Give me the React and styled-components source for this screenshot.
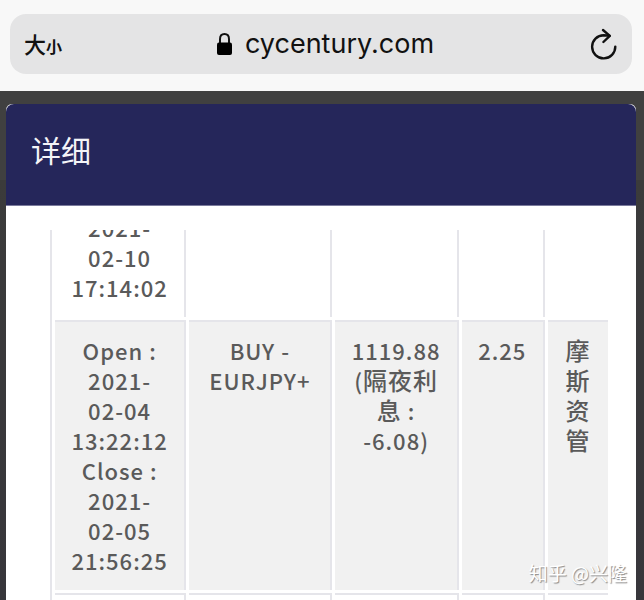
import React, { useLayoutEffect, useRef } from "react";
import styled, { createGlobalStyle } from "styled-components";

const GlobalStyle = createGlobalStyle`
  * {
    box-sizing: border-box;
  }

  body {
    margin: 0;
    font-family: "Noto Sans CJK SC", sans-serif;
  }

  button {
    border: none;
    background: none;
    padding: 0;
    color: inherit;
    font-family: inherit;
    cursor: pointer;
  }
`;

const Screen = styled.div`
  position: relative;
  display: flex;
  flex-direction: column;
  height: 100vh;
  overflow: hidden;
  background: linear-gradient(#404040, #404040 180px, #3b3b3b 180px, #37363b);
`;

const BrowserBar = styled.header`
  flex: none;
  padding: 14px 12px 17px 10px;
  background-color: #f8f8f8;
`;

const AddressField = styled.div`
  display: grid;
  grid-template-columns: 44px 1fr 44px;
  align-items: center;
  height: 60px;
  padding: 0 6px 0 14px;
  border-radius: 16px;
  background-color: #e4e4e5;
  color: #111;
`;

const TextSizeButton = styled.button`
  display: flex;
  align-items: baseline;
  font-size: 22px;
  font-weight: 500;
  line-height: 30px;

  small {
    font-size: 16px;
    font-weight: 700;
  }
`;

const Address = styled.a`
  display: flex;
  align-items: center;
  justify-content: center;
  gap: 12px;
  color: inherit;
  font-family: Inter, sans-serif;
  font-size: 27px;
  line-height: 32px;
  text-decoration: none;
`;

const ReloadButton = styled.button`
  display: flex;
  justify-content: center;
`;

const Modal = styled.section`
  flex: 1;
  min-height: 0;
  display: flex;
  flex-direction: column;
  margin: 13px 8px 0 6px;
  border-radius: 6px 6px 0 0;
  background-color: #fff;
`;

const ModalHeader = styled.div`
  flex: none;
  padding: 25px 25px 36px;
  border-bottom: 1px solid #7a7a9c;
  border-radius: 8px 8px 0 0;
  background-color: #25265a;
`;

const ModalTitle = styled.h1`
  margin: 0;
  color: #f4f4f8;
  font-size: 30px;
  font-weight: 400;
  line-height: 40px;
`;

const ModalBody = styled.div`
  flex: 1;
  min-height: 0;
  margin: 24px 28px 0 44px;
  overflow: auto;
  scrollbar-width: none;
`;

const Table = styled.table`
  table-layout: fixed;
  width: 563px;
  border-left: 2px solid #e5e5ea;
  border-collapse: separate;
  border-spacing: 3px;
`;

const Column = styled.col`
  width: ${({ $width }) => $width}px;
`;

const Row = styled.tr`
  background-color: ${({ $shaded }) => ($shaded ? "#f1f1f1" : "#fff")};
`;

const Cell = styled.td`
  padding: 13px 0 15px;
  border-top: 2px solid #e5e5ea;
  border-right: 2px solid #e5e5ea;
  color: #5a5a5a;
  font-size: 22px;
  font-weight: 500;
  letter-spacing: 1px;
  line-height: 30px;
  text-align: center;
  vertical-align: top;
  white-space: pre-line;
`;

const Han = styled.span`
  font-size: 24px;
  line-height: 1;
`;

const Watermark = styled.div`
  position: absolute;
  right: 17px;
  bottom: 13px;
  color: #fff;
  font-size: 19px;
  line-height: 28px;
  text-shadow: 1px 1px 1px #888;
`;

const LockIcon = () => (
  <svg width="17" height="24" viewBox="0 0 17 24" aria-hidden="true">
    <path
      d="M4 12V7.2C4 4 5.8 2 8.5 2S13 4 13 7.2V12"
      fill="none"
      stroke="#111"
      strokeWidth="2"
    />
    <rect x="1" y="10.5" width="15" height="12.5" rx="2" fill="#000" />
  </svg>
);

const ReloadIcon = () => (
  <svg
    width="28"
    height="32"
    viewBox="0 0 28 32"
    fill="none"
    stroke="#111"
    strokeWidth="2.4"
    strokeLinecap="round"
    strokeLinejoin="round"
    aria-hidden="true"
  >
    <path d="M25.3 18.6A11.6 11.6 0 1 1 13.7 7.2L19.6 7.8" />
    <path d="M13 2L19.8 7.9L13.4 14" />
  </svg>
);

const columns = [131, 143, 123, 83, 62];

const trades = [
  { id: 1, cells: ["2021-\n02-10\n17:14:02", "", "", "", ""] },
  {
    id: 2,
    shaded: true,
    cells: [
      "Open :\n2021-\n02-04\n13:22:12\nClose :\n2021-\n02-05\n21:56:25",
      "BUY -\nEURJPY+",
      "1119.88\n(隔夜利\n息 :\n-6.08)",
      "2.25",
      "摩\n斯\n资\n管",
    ],
  },
  { id: 3, cells: ["", "", "", "", ""] },
];

// Chinese runs are set a little larger than the Latin text beside them
const renderText = (text) =>
  text
    .split(/([\u4e00-\u9fff]+)/)
    .map((part, i) => (i % 2 ? <Han key={i}>{part}</Han> : part));

const App = () => {
  const body = useRef(null);

  useLayoutEffect(() => {
    body.current.scrollTop = 36;
  }, []);

  return (
    <>
      <GlobalStyle />
      <Screen>
        <BrowserBar>
          <AddressField>
            <TextSizeButton type="button">
              大<small>小</small>
            </TextSizeButton>
            <Address href="#">
              <LockIcon />
              cycentury.com
            </Address>
            <ReloadButton type="button" aria-label="Reload">
              <ReloadIcon />
            </ReloadButton>
          </AddressField>
        </BrowserBar>
        <Modal>
          <ModalHeader>
            <ModalTitle>详细</ModalTitle>
          </ModalHeader>
          <ModalBody ref={body}>
            <Table>
              <colgroup>
                {columns.map((width, i) => (
                  <Column key={i} $width={width} />
                ))}
              </colgroup>
              <tbody>
                {trades.map((trade) => (
                  <Row key={trade.id} $shaded={trade.shaded}>
                    {trade.cells.map((text, i) => (
                      <Cell key={i}>{renderText(text)}</Cell>
                    ))}
                  </Row>
                ))}
              </tbody>
            </Table>
          </ModalBody>
        </Modal>
        <Watermark>知乎 @兴隆</Watermark>
      </Screen>
    </>
  );
};

export default App;
